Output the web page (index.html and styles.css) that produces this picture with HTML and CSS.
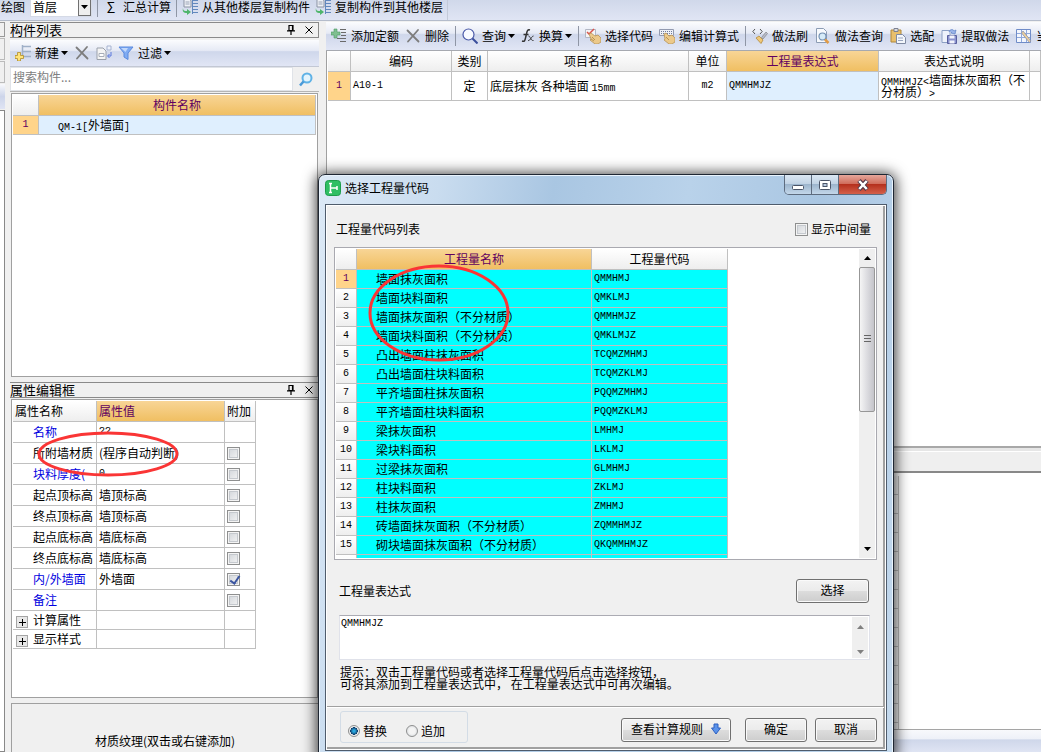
FILE: index.html
```html
<!DOCTYPE html>
<html lang="zh-CN">
<head>
<meta charset="utf-8">
<title>选择工程量代码</title>
<link rel="stylesheet" href="styles.css">
</head>
<body>
<svg class="defs" aria-hidden="true">
  <defs>
    <symbol id="i-copy-floor" viewBox="0 0 16 16"><path d="M2 0h6l1 2v6H2z" fill="#eef1f6" stroke="#8b93a3"/><path d="M3.500 3h4M3.500 5h4" stroke="#9aa3b5"/><path d="M10.500 1v14M10.500 1.500H16M10.500 4.500H16M10.500 7.500H16M10.500 10.500H16M10.500 13.500H16" stroke="#6288bd" fill="none"/><path d="M1 9c0 3 2 3 4 3v-2l4 3-4 3v-2C2 14 0 13 1 9z" fill="#4fb56b"/></symbol>
    <symbol id="i-x" viewBox="0 0 16 16"><path d="M2.500 2.500l11 11M13 2L3 13.500" stroke="#7d7d7d" stroke-width="1.800" stroke-linecap="round"/></symbol>
    <symbol id="i-new" viewBox="0 0 16 16"><path d="M7.500 0v13M7.500 1.500H16M7.500 6.500H16M7.500 11.500H16" stroke="#9fb0c8" stroke-width="1.500" fill="none"/><path d="M2.500 7.500h3v3h3v3h-3V16h-3v-2.500H0v-3h2.500z" fill="#ffe37a" stroke="#b08d2a" stroke-width=".8"/></symbol>
    <symbol id="i-pages" viewBox="0 0 16 16"><path d="M1 3h6l3 3v8.500H1z" fill="#f4f4f4" stroke="#9aa0ab"/><path d="M3 8.500h5v3H3z" fill="#fff" stroke="#a8aeb9"/><path d="M11 1h4v4h-4z" fill="#eef2fb" stroke="#a6b3d0"/><path d="M15 7v4h-3m1.500-2l-2 2 2 2" fill="none" stroke="#5a78dd"/></symbol>
    <symbol id="i-funnel" viewBox="0 0 16 16"><path d="M1 2h14L10 8v6.500L6 12V8z" fill="#7fabf2" stroke="#5b8ade"/><path d="M3 3h7L7.500 7z" fill="#c2d8fb"/></symbol>
    <symbol id="i-search" viewBox="0 0 16 16"><circle cx="9" cy="7" r="4.500" fill="#e3f4fd" stroke="#5fb2e6" stroke-width="2"/><path d="M5.500 10.500L2 14.500" stroke="#4a9ad8" stroke-width="2.500"/></symbol>
    <symbol id="i-add" viewBox="0 0 16 16"><path d="M3 1h3v3h3v3H6v3H3V7H0V4h3z" fill="#7fbf90" stroke="#4c9a62" stroke-width=".6"/><path d="M9 1.500h6M10 4.500h5M10 7.500h5M6 10.500h9M9 13.500h6" stroke="#6a6a6a"/></symbol>
    <symbol id="i-find" viewBox="0 0 16 16"><circle cx="6.500" cy="6.500" r="5.500" fill="#f8faff" stroke="#4a59a8" stroke-width="1.200"/><path d="M10.500 10.500l5 5" stroke="#3a4f9c" stroke-width="2"/></symbol>
    <symbol id="i-fx" viewBox="0 0 14 16"><path d="M9 2c-3-1-3 2-4 6s-1 6-4 5M2.500 6.500h5" fill="none" stroke="#333" stroke-width="1.500"/><path d="M7.500 8c2 0 2 5 5 4.500M12.500 8c-2 0-3 5-5.500 4.500" fill="none" stroke="#333"/></symbol>
    <symbol id="i-hand" viewBox="0 0 16 16"><path d="M.5 1.500h10v8H.5z" fill="#f4f4f6" stroke="#b2b7c4"/><path d="M2 4l2 2 5-5" fill="none" stroke="#d9534b" stroke-width="1.500"/><path d="M4 6l2-1 4 3 3-1 3 3v4l-3 2h-3L5 12l1-1z" fill="#ecc98a" stroke="#b08a4a" stroke-width=".7"/><path d="M7 9l3 3M6 11l3 2" stroke="#a47c38" stroke-width=".7"/></symbol>
    <symbol id="i-keys" viewBox="0 0 16 16"><path d="M.5 1.500h14v6H.5z" fill="#eef0f6" stroke="#929ab0"/><path d="M2 3.500h11M2 5.500h11" stroke="#6f7a99" stroke-dasharray="1 1"/><path d="M5 6l2-1 3 3 3-1 3 3v4l-3 2h-3l-5-4 1-1z" fill="#ecc98a" stroke="#b08a4a" stroke-width=".7"/><path d="M7 9l3 3" stroke="#a47c38" stroke-width=".7"/></symbol>
    <symbol id="i-brush" viewBox="0 0 16 16"><path d="M3 1L.8 3.500 3 6M8 1l2.200 2.500L8 6" fill="none" stroke="#555"/><path d="M14 4l1.500 1.500L11 11 9.500 9.500z" fill="#b8bccb" stroke="#777" stroke-width=".6"/><path d="M7 8l4 4-2 3.500L4 10z" fill="#f0c878" stroke="#b38a3c" stroke-width=".8"/></symbol>
    <symbol id="i-doc-find" viewBox="0 0 16 16"><path d="M1.500.5h7l3 3v11h-10z" fill="#f8fafd" stroke="#8c9cb4"/><circle cx="7.500" cy="8.500" r="3.500" fill="#d6ebf8" stroke="#7390b3" stroke-width="1.200"/><path d="M10 11.500l3.500 3.500" stroke="#e09a45" stroke-width="2.500"/></symbol>
    <symbol id="i-paste" viewBox="0 0 16 16"><path d="M1 2h10v12H1z" fill="#e8bf6c" stroke="#b0883a"/><path d="M4 .5h4v3H4z" fill="#d9dce4" stroke="#7c8190"/><path d="M6.500 6.500h6l3 3v6h-9z" fill="#f3f6fb" stroke="#7f8aa2"/><path d="M8 10h5M8 12.500h5" stroke="#9aa6c0"/></symbol>
    <symbol id="i-extract" viewBox="0 0 16 16"><path d="M1 2.500h8v12H1z" fill="#eef2fb" stroke="#8da0c4"/><path d="M8 4c1-3 4-3 5-1l2-1-1 4-4-1 1-1" fill="#9ab4e8" stroke="#5b7fc4" stroke-width=".7"/><path d="M6.500 7.500h9v8h-9z" fill="#8b93cf" stroke="#585f9e"/><path d="M8.500 7.500h5v3h-5zM8.500 12.500h5v3h-5z" fill="#f1f3fb"/></symbol>
    <symbol id="i-grid-edit" viewBox="0 0 16 16"><path d="M.5 1.500h14v13H.5z" fill="#f3f6fd" stroke="#6f8cc8"/><path d="M1 5.500h13M1 9.500h13M5.500 2v12M10.500 2v12" stroke="#8fa8dc"/><path d="M7 3l8 10-1.500 1.500L5.500 5z" fill="#efd09a" stroke="#8a91a8" stroke-width=".8"/></symbol>
    <symbol id="i-pin" viewBox="0 0 10 10"><path d="M3 .5h4v5H3zM6.500 1v4M1 5.800h8M5 6v4" fill="none" stroke="#000" stroke-width="1.200"/></symbol>
    <symbol id="i-close" viewBox="0 0 10 10"><path d="M1.500 1.500l7 7M8.500 1.500l-7 7" stroke="#000"/></symbol>
    <symbol id="i-caret" viewBox="0 0 7 4"><path d="M0 0h7L3.500 4z"/></symbol>
    <symbol id="i-up" viewBox="0 0 7 4"><path d="M0 4h7L3.500 0z"/></symbol>
  </defs>
</svg>

<div class="app">
  <header class="topbar">
    <div class="topbar-tools">
      <span>绘图</span>
      <label class="floor"><select aria-label="楼层"><option>首层</option></select><span class="drop"><svg class="caret"><use href="#i-caret"/></svg></span></label>
      <i class="sep"></i>
      <button class="tool"><span class="sigma">Σ</span>汇总计算</button>
      <i class="sep"></i>
      <button class="tool"><svg class="icon"><use href="#i-copy-floor"/></svg>从其他楼层复制构件</button>
      <button class="tool"><svg class="icon"><use href="#i-copy-floor"/></svg>复制构件到其他楼层</button>
    </div>
  </header>

  <div class="workspace">
    <div class="edge"><i class="edge-cap"></i><i class="edge-cap tall"></i><i class="edge-cap tall"></i><i class="edge-bar"></i><i class="edge-body"></i></div>

    <aside class="sidebar">
      <section class="panel list-panel">
        <h2 class="panel-title">构件列表<span class="panel-tools"><svg><use href="#i-pin"/></svg><svg><use href="#i-close"/></svg></span></h2>
        <div class="toolbar side-tools">
          <button class="tool"><svg class="icon"><use href="#i-new"/></svg>新建<svg class="caret"><use href="#i-caret"/></svg></button>
          <button class="tool" aria-label="删除"><svg class="icon"><use href="#i-x"/></svg></button>
          <button class="tool" aria-label="复制"><svg class="icon"><use href="#i-pages"/></svg></button>
          <button class="tool"><svg class="icon"><use href="#i-funnel"/></svg>过滤<svg class="caret"><use href="#i-caret"/></svg></button>
        </div>
        <div class="search"><input type="text" placeholder="搜索构件..." aria-label="搜索构件"><button class="tool" aria-label="搜索"><svg class="icon"><use href="#i-search"/></svg></button></div>
        <div class="box">
          <table class="grid parts">
            <colgroup><col class="c-num"><col></colgroup>
            <tr><th></th><th class="hot">构件名称</th></tr>
            <tr><th class="hot-num code">1</th><td class="sel"><span class="code">QM-1[</span>外墙面<span class="code">]</span></td></tr>
          </table>
        </div>
      </section>

      <section class="panel prop-panel">
        <h2 class="panel-title">属性编辑框<span class="panel-tools"><svg><use href="#i-pin"/></svg><svg><use href="#i-close"/></svg></span></h2>
        <div class="box">
          <table class="grid props">
            <colgroup><col class="c-key"><col class="c-val"><col class="c-add"></colgroup>
            <tr><th>属性名称</th><th class="hot">属性值</th><th>附加</th></tr>
            <tr><td class="blue">名称</td><td class="code">??</td><td></td></tr>
            <tr><td>所附墙材质</td><td>(程序自动判断)</td><td><input type="checkbox" class="check" aria-label="所附墙材质附加"></td></tr>
            <tr><td class="blue">块料厚度(</td><td class="code">0</td><td><input type="checkbox" class="check" aria-label="块料厚度附加"></td></tr>
            <tr><td>起点顶标高</td><td>墙顶标高</td><td><input type="checkbox" class="check" aria-label="起点顶标高附加"></td></tr>
            <tr><td>终点顶标高</td><td>墙顶标高</td><td><input type="checkbox" class="check" aria-label="终点顶标高附加"></td></tr>
            <tr><td>起点底标高</td><td>墙底标高</td><td><input type="checkbox" class="check" aria-label="起点底标高附加"></td></tr>
            <tr><td>终点底标高</td><td>墙底标高</td><td><input type="checkbox" class="check" aria-label="终点底标高附加"></td></tr>
            <tr><td class="blue">内/外墙面</td><td>外墙面</td><td><input type="checkbox" class="check" checked aria-label="内/外墙面附加"></td></tr>
            <tr><td class="blue">备注</td><td></td><td><input type="checkbox" class="check" aria-label="备注附加"></td></tr>
            <tr class="group"><td><button class="plus" aria-label="展开计算属性"></button>计算属性</td><td></td><td></td></tr>
            <tr class="group"><td><button class="plus" aria-label="展开显示样式"></button>显示样式</td><td></td><td></td></tr>
          </table>
          <svg class="mark mark-prop" viewBox="0 0 142 47"><ellipse cx="71" cy="23" rx="69" ry="21"/></svg>
        </div>
      </section>

      <section class="texture">材质纹理(双击或右键添加)</section>
    </aside>

    <main class="main">
      <div class="toolbar main-tools">
        <button class="tool"><svg class="icon"><use href="#i-add"/></svg>添加定额</button>
        <button class="tool"><svg class="icon"><use href="#i-x"/></svg>删除</button>
        <i class="sep"></i>
        <button class="tool"><svg class="icon"><use href="#i-find"/></svg>查询<svg class="caret"><use href="#i-caret"/></svg></button>
        <button class="tool"><svg class="icon fx"><use href="#i-fx"/></svg>换算<svg class="caret"><use href="#i-caret"/></svg></button>
        <i class="sep"></i>
        <button class="tool"><svg class="icon"><use href="#i-hand"/></svg>选择代码</button>
        <button class="tool"><svg class="icon"><use href="#i-keys"/></svg>编辑计算式</button>
        <i class="sep"></i>
        <div class="tool-group">
          <button class="tool"><svg class="icon"><use href="#i-brush"/></svg>做法刷</button>
          <button class="tool"><svg class="icon"><use href="#i-doc-find"/></svg>做法查询</button>
          <button class="tool"><svg class="icon"><use href="#i-paste"/></svg>选配</button>
          <button class="tool"><svg class="icon"><use href="#i-extract"/></svg>提取做法</button>
          <button class="tool"><svg class="icon"><use href="#i-grid-edit"/></svg>当前</button>
        </div>
      </div>
      <div class="quota">
        <table class="grid items">
          <colgroup><col class="w-no"><col class="w-code"><col class="w-type"><col class="w-name"><col class="w-unit"><col class="w-expr"><col class="w-desc"><col></colgroup>
          <tr><th></th><th>编码</th><th>类别</th><th>项目名称</th><th>单位</th><th class="hot">工程量表达式</th><th>表达式说明</th><th></th></tr>
          <tr><th class="hot-num code">1</th><td class="code">A10-1</td><td class="mid">定</td><td>底层抹灰 各种墙面 <span class="code">15mm</span></td><td class="mid code">m2</td><td class="sel code">QMMHMJZ</td><td class="wrap"><span class="code">QMMHMJZ&lt;</span>墙面抹灰面积（不分材质）<span class="code">&gt;</span></td><td></td></tr>
        </table>
      </div>
      <div class="splitter"></div>
      <div class="detail"><div class="ticks"></div></div>
      <footer class="status"></footer>
    </main>
  </div>

  <div class="dialog" role="dialog" aria-label="选择工程量代码">
    <div class="titlebar">
      <svg class="logo" viewBox="0 0 16 16"><rect x=".5" y=".5" width="15" height="15" rx="3" fill="#2fbf63" stroke="#1d9c4b"/><path d="M4 3.500h3M5.500 3.500v9M4 12.500h3M6 8h6M12 6v4" fill="none" stroke="#fff" stroke-width="1.500"/></svg>
      <span class="title">选择工程量代码</span>
      <div class="winbtns">
        <button class="min" aria-label="最小化"><svg viewBox="0 0 14 12"><rect x="1.500" y="6.500" width="11" height="4" rx="1" fill="#fff" stroke="#4b5568"/></svg></button>
        <button class="max" aria-label="最大化"><svg viewBox="0 0 14 12"><rect x="1.500" y="1.500" width="11" height="9" rx="1" fill="#fff" stroke="#4b5568"/><rect x="5" y="4.500" width="4" height="3" fill="#b9cbe0" stroke="#4b5568"/></svg></button>
        <button class="close" aria-label="关闭"><svg viewBox="0 0 14 12"><path d="M3 1.500l8 9M11 1.500l-8 9" stroke="#54394a" stroke-width="4.500"/><path d="M3.200 2l7.600 8M10.800 2l-7.600 8" stroke="#fff" stroke-width="2.500"/></svg></button>
      </div>
    </div>
    <div class="dialog-body">
      <div class="row head"><span>工程量代码列表</span><label class="opt"><input type="checkbox" class="check">显示中间量</label></div>
      <div class="codes">
        <div class="codes-view">
          <table class="grid cyan">
            <colgroup><col class="k-no"><col class="k-name"><col class="k-code"></colgroup>
            <tr><th></th><th class="hot">工程量名称</th><th>工程量代码</th></tr>
            <tr><th class="hot-num">1</th><td>墙面抹灰面积</td><td>QMMHMJ</td></tr>
            <tr><th>2</th><td>墙面块料面积</td><td>QMKLMJ</td></tr>
            <tr><th>3</th><td>墙面抹灰面积（不分材质）</td><td>QMMHMJZ</td></tr>
            <tr><th>4</th><td>墙面块料面积（不分材质）</td><td>QMKLMJZ</td></tr>
            <tr><th>5</th><td>凸出墙面柱抹灰面积</td><td>TCQMZMHMJ</td></tr>
            <tr><th>6</th><td>凸出墙面柱块料面积</td><td>TCQMZKLMJ</td></tr>
            <tr><th>7</th><td>平齐墙面柱抹灰面积</td><td>PQQMZMHMJ</td></tr>
            <tr><th>8</th><td>平齐墙面柱块料面积</td><td>PQQMZKLMJ</td></tr>
            <tr><th>9</th><td>梁抹灰面积</td><td>LMHMJ</td></tr>
            <tr><th>10</th><td>梁块料面积</td><td>LKLMJ</td></tr>
            <tr><th>11</th><td>过梁抹灰面积</td><td>GLMHMJ</td></tr>
            <tr><th>12</th><td>柱块料面积</td><td>ZKLMJ</td></tr>
            <tr><th>13</th><td>柱抹灰面积</td><td>ZMHMJ</td></tr>
            <tr><th>14</th><td>砖墙面抹灰面积（不分材质）</td><td>ZQMMHMJZ</td></tr>
            <tr><th>15</th><td>砌块墙面抹灰面积（不分材质）</td><td>QKQMMHMJZ</td></tr>
            <tr><th></th><td></td><td></td></tr>
          </table>
        </div>
        <div class="scroll"><svg class="caret"><use href="#i-up"/></svg><div class="track"><div class="thumb"></div></div><svg class="caret"><use href="#i-caret"/></svg></div>
        <svg class="mark mark-code" viewBox="0 0 142 98"><ellipse cx="71" cy="49" rx="69" ry="47"/></svg>
      </div>
      <div class="row expr"><label for="expr">工程量表达式</label><button class="btn">选择</button></div>
      <div class="editor"><textarea id="expr">QMMHMJZ</textarea><div class="scroll faint"><svg class="caret"><use href="#i-up"/></svg><svg class="caret"><use href="#i-caret"/></svg></div></div>
      <p class="hint">提示：双击工程量代码或者选择工程量代码后点击选择按钮，<br>可将其添加到工程量表达式中， 在工程量表达式中可再次编辑。</p>
      <div class="foot">
        <fieldset class="modes">
          <label class="opt"><input type="radio" name="mode" class="radio" checked>替换</label>
          <label class="opt"><input type="radio" name="mode" class="radio">追加</label>
        </fieldset>
        <button class="btn wide">查看计算规则<svg class="arrow" viewBox="0 0 10 12"><path d="M3 1h4v4h2.500L5 11 .5 5H3z" fill="#5b93ea" stroke="#2c5fc0"/></svg></button>
        <button class="btn small ok">确定</button>
        <button class="btn small">取消</button>
      </div>
    </div>
  </div>
</div>
</body>
</html>
```
FILE: styles.css
```css
* { box-sizing: border-box; }
body {
  margin: 0;
  font: 12px/16px "Noto Sans CJK SC", sans-serif;
  color: #000;
  background: #f0f0f0;
}
.defs { position: absolute; width: 0; height: 0; }
button, input, select, textarea { font: inherit; color: inherit; margin: 0; }
.app {
  position: relative;
  height: 100vh;
  overflow: hidden;
  display: flex;
  flex-direction: column;
}
.code { font-family: "Liberation Mono", "Noto Sans CJK SC", monospace; font-size: 10px; }
span.code { line-height: 0; }

/* top toolbar */
.topbar {
  flex: none;
  height: 21px;
  background: linear-gradient(#d0d8ea, #e0e5f4);
  border-bottom: 1px solid #b4bccb;
  white-space: nowrap;
}
.topbar-tools {
  display: flex;
  align-items: center;
  gap: 5px;
  width: max-content;
  height: 20px;
  padding: 0 4px 7px 1px;
  border-right: 1px solid #c3cad9;
}
.floor { position: relative; display: flex; width: 62px; height: 20px; }
.floor select {
  appearance: none;
  width: 100%;
  padding: 0 2px;
  border: 1px solid #d5dae6;
  border-radius: 0;
  background: #fff;
  line-height: 14px;
}
.drop {
  position: absolute;
  right: 1px;
  top: 1px;
  bottom: 1px;
  width: 13px;
  display: flex;
  align-items: center;
  justify-content: center;
  border: 1px solid #707070;
  background: #eee;
  pointer-events: none;
}
.sep { flex: none; width: 1px; height: 20px; background: #8f96a5; }
.tool {
  display: flex;
  align-items: center;
  gap: 4px;
  flex: none;
  padding: 0;
  border: 0;
  background: none;
  white-space: nowrap;
}
.sigma { width: 16px; font-size: 14px; text-align: center; }
.icon { width: 16px; height: 16px; flex: none; }
.icon.fx { width: 14px; }
.caret { width: 7px; height: 4px; flex: none; }
.tool .caret { margin-left: -2px; }

/* workspace */
.workspace { flex: 1; display: flex; min-height: 0; padding-top: 1px; }
.edge {
  flex: 0 0 5px;
  display: flex;
  flex-direction: column;
  gap: 1px;
  margin-right: 5px;
}
.edge-cap { height: 15px; border: 1px solid #999; border-left: 0; }
.edge-cap.tall { height: 22px; border-color: #bbb; }
.edge-bar { height: 25px; background: linear-gradient(#f8f9fc, #cdd5ea 50%, #dfe4f4); }
.edge-body { flex: 1; background: #fff; border: 1px solid #888; border-left: 0; }
.sidebar {
  flex: 0 0 309px;
  display: flex;
  flex-direction: column;
  gap: 5px;
  margin-right: 7px;
}
.panel { display: flex; flex-direction: column; }
.panel-title {
  display: flex;
  justify-content: space-between;
  align-items: center;
  height: 16px;
  margin: 0;
  padding-right: 4px;
  border: 1px solid #8a8a8a;
  border-left: 0;
  font-size: 13px;
  font-weight: normal;
  line-height: 14px;
}
.panel-tools { display: flex; gap: 8px; }
.panel-tools svg { width: 10px; height: 10px; }
.toolbar {
  display: flex;
  align-items: center;
  background: linear-gradient(#fbfcfe, #e6eaf5 40%, #cfd7eb 45%, #e1e6f5);
}
.side-tools { height: 27px; margin-top: 2px; padding: 0 5px; gap: 6px; border-bottom: 1px solid #c3c8d4; }
.search { display: flex; height: 25px; border-bottom: 1px solid #b5b5b5; }
.search input { flex: 1; min-width: 0; border: 1px solid #e0e3e8; padding: 0 2px 4px; background: #fff; }
.search input::placeholder { color: #808080; opacity: 1; }
.search .tool { padding: 0 5px; }
.box {
  position: relative;
  flex: 1;
  margin: 1px 1px 0;
  padding: 1px;
  border: 1px solid #a0a0a0;
  background: #fff;
}
.list-panel { flex: 0 0 355px; }
.prop-panel { flex: 0 0 316px; }
.texture {
  flex: 1;
  margin-left: 1px;
  padding-top: 29px;
  border: 1px solid #a0a0a0;
  border-bottom: 0;
  text-align: center;
}

/* grids */
.grid { border-collapse: separate; border-spacing: 0; table-layout: fixed; width: 100%; }
.grid th, .grid td {
  padding: 0 2px;
  overflow: hidden;
  border: 0 solid #c0c0c0;
  border-width: 0 1px 1px 0;
  font-weight: normal;
  line-height: 16px;
  text-align: left;
  white-space: nowrap;
}
.grid th { text-align: center; background: linear-gradient(#fff, #eee); }
.grid tr:first-child th { height: 21px; }
.grid th.hot { background: linear-gradient(#f8d596, #f0bf62); color: #600060; }
.grid th.hot-num { background: #ffd48a; color: #600060; }
.grid td.sel { background: #dfeffe; }
.grid td.mid { text-align: center; }
.parts .c-num { width: 26px; }
.parts td { height: 19px; padding-left: 19px; }
.grid.props { width: 243px; }
.c-key { width: 84px; }
.c-val { width: 128px; }
.c-add { width: 31px; }
.props tr:first-child th { text-align: left; }
.props td { height: 21px; }
.props td:first-child { padding-left: 20px; padding-right: 0; }
.props tr.group td { height: 19px; }
.props tr.group td:first-child { padding-left: 3px; }
.props .blue { color: #0000e0; }
.plus {
  width: 12px;
  height: 12px;
  margin-right: 5px;
  padding: 0;
  vertical-align: -2px;
  border: 1px solid #a5a5a5;
  background:
    linear-gradient(#000, #000) center / 7px 1px no-repeat,
    linear-gradient(#000, #000) center / 1px 7px no-repeat,
    #e8e8e8;
}
.check {
  appearance: none;
  display: block;
  width: 13px;
  height: 13px;
  border: 1px solid #8e8f8f;
  background: linear-gradient(135deg, #cfd3d8, #f6f6f6);
  box-shadow: inset 0 0 0 1px #f4f4f4, inset 0 0 0 2px #c5c9ce;
}
.check:checked::after {
  content: "";
  display: block;
  width: 4px;
  height: 8px;
  margin: 0 0 0 4px;
  border: solid #3b55a0;
  border-width: 0 2px 2px 0;
  transform: rotate(35deg);
}

/* main area */
.main { flex: 1; min-width: 0; display: flex; flex-direction: column; background: #fff; }
.main-tools { flex: none; height: 29px; gap: 6px; padding-left: 5px; overflow: hidden; border-bottom: 1px solid #a6a9b0; }
.tool-group { display: flex; gap: 7px; }
.quota { flex: 0 0 395px; padding-left: 1px; border-left: 1px solid #a0a0a0; }
.w-no { width: 23px; }
.w-code { width: 101px; }
.w-type { width: 36px; }
.w-name { width: 201px; }
.w-unit { width: 38px; }
.w-expr { width: 152px; }
.w-desc { width: 151px; }
.items td { height: 29px; }
.items td.wrap { white-space: normal; line-height: 12px; padding-right: 0; }
.splitter { flex: 0 0 27px; border-top: 2px solid #a8a8a8; border-bottom: 2px solid #888; background: #efefef; box-shadow: inset 0 3px #e6e6e6, inset 0 4px #fff; }
.detail { flex: 1; padding-top: 3px; }
.ticks {
  width: 573px;
  height: 100%;
  border-right: 1px solid #c0c0c0;
  background: repeating-linear-gradient(#f7f7f7 0 18px, #c0c0c0 18px 19px);
}
.status { flex: 0 0 23px; border-top: 1px solid #a5a5a5; background: linear-gradient(#f8f9fc, #eef1f8 40%, #cfd7ea 45%, #dfe4f3); }

/* dialog */
.dialog {
  position: absolute;
  left: 318px;
  top: 174px;
  width: 576px;
  padding: 0 6px 8px;
  border: 1px solid #1f2733;
  border-radius: 7px 7px 0 0;
  background: linear-gradient(100deg, #dce9f6 0, #c9dcef 18%, #a9c6e2 35%, #b9d2ea 55%, #a9c6e2 75%, #c5daee);
  box-shadow: inset 0 0 0 1px #eaf4fd, 0 1px 14px 2px rgba(0, 0, 0, .75);
}
.titlebar { display: flex; align-items: flex-start; height: 29px; }
.logo { width: 16px; height: 16px; margin-top: 5px; }
.title { flex: 1; margin: 5px 0 0 4px; font-size: 12px; }
.winbtns { display: flex; border: 1px solid #5d6b7e; border-top: 0; border-radius: 0 0 5px 5px; overflow: hidden; }
.winbtns button {
  display: flex;
  align-items: center;
  justify-content: center;
  width: 27px;
  height: 19px;
  padding: 0;
  border: 0;
  border-right: 1px solid #5d6b7e;
  background: linear-gradient(#dbe7f3, #c0d2e4 48%, #9db5cd 50%, #c3d7ea);
}
.winbtns svg { width: 14px; height: 12px; }
.winbtns .close { width: 47px; border-right: 0; background: linear-gradient(#e5a79c, #cf6a58 48%, #b5301d 50%, #d4604a); }
.dialog-body {
  border: 1px solid #4f5c6c;
  background: #f0f0f0;
  box-shadow: inset 0 0 0 1px #fff, inset -2px -2px 0 1px #a0a0a0;
  padding: 14px 9px 7px 8px;
}
.row { display: flex; justify-content: space-between; align-items: center; }
.head { height: 20px; padding: 0 6px 0 2px; }
.opt { display: flex; align-items: center; gap: 3px; }
.codes { position: relative; display: flex; height: 313px; margin-top: 8px; padding: 1px; border: 1px solid #a9a9b0; background: #fff; }
.codes-view { flex: 1; overflow: hidden; }
.grid.cyan { width: 392px; }
.k-no { width: 21px; }
.k-name { width: 235px; }
.k-code { width: 136px; }
.cyan th, .cyan td { height: 19px; }
.cyan td { background: #0ff; }
.cyan td:nth-child(2) { padding-left: 19px; }
.cyan td:nth-child(3), .cyan tr:not(:first-child) th { font-family: "Liberation Mono", monospace; font-size: 10px; }
.scroll { flex: 0 0 16px; display: flex; flex-direction: column; align-items: center; padding: 7px 0; background: #efefef; }
.track { flex: 1; width: 100%; padding: 7px 0; }
.thumb {
  height: 145px;
  border: 1px solid #979797;
  border-radius: 2px;
  background:
    repeating-linear-gradient(#666 0 1px, transparent 1px 3px) center / 7px 9px no-repeat,
    linear-gradient(90deg, #f5f5f5, #dcdce0 50%, #c4c4ca);
}
.expr { height: 25px; margin-top: 18px; padding: 0 8px 0 5px; }
.btn {
  width: 73px;
  height: 24px;
  padding: 0 0 2px;
  border: 1px solid #707070;
  border-radius: 3px;
  background: linear-gradient(#f3f3f3, #ebebeb 50%, #dcdcdc 52%, #cdcdcd);
  box-shadow: inset 0 0 0 1px #fafafa;
}
.editor { display: flex; height: 45px; margin: 12px 7px 0 5px; border: 1px solid #e0e2ea; border-top-color: #ababb3; background: #fff; }
.editor textarea { flex: 1; padding: 1px; border: 0; resize: none; background: none; outline: 0; font: 10px/14px "Liberation Mono", monospace; }
.faint { justify-content: space-between; margin: 1px; padding: 8px 0 4px; fill: #808080; }
.hint { margin: 6px 0 0 6px; line-height: 12px; }
.foot {
  display: flex;
  align-items: center;
  margin: 16px -7px 0;
  padding: 4px 7px 0 13px;
  border-top: 1px solid #a0a0a0;
  box-shadow: inset 0 1px #fff;
}
.modes { display: flex; gap: 19px; width: 128px; height: 32px; margin: 0 auto 0 0; padding: 8px 7px 0; border: 1px solid #d3dce6; border-radius: 3px; }
.radio {
  appearance: none;
  width: 12px;
  height: 12px;
  border: 1px solid #8e8f8f;
  border-radius: 50%;
  background: radial-gradient(#f4f4f4 40%, #cfd3d8);
}
.radio:checked { background: radial-gradient(#2aa8e0 0 15%, #12416e 50%, #eee 55%); }
.btn.wide { display: flex; align-items: center; justify-content: center; gap: 8px; width: 110px; margin: 6px 14px 0 0; }
.btn.small { width: 62px; margin-top: 6px; }
.btn.ok { margin-right: 8px; }
.arrow { width: 10px; height: 12px; }

/* red annotation rings */
.mark { position: absolute; fill: none; stroke: #fa3535; stroke-width: 3; pointer-events: none; }
.mark-prop { left: 25px; top: 31px; width: 142px; height: 47px; }
.mark-code { left: 33px; top: 16px; width: 142px; height: 98px; }
```
